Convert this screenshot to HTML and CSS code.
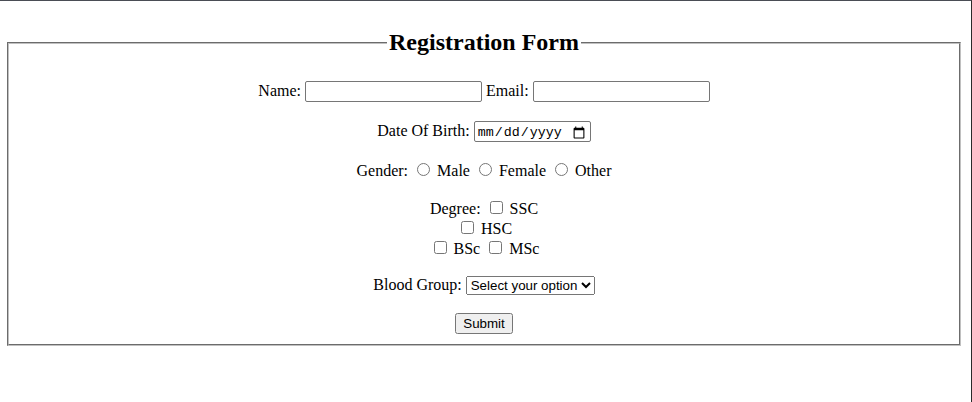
FILE: index.html
```html
<!DOCTYPE html>
<html>
<head>
<meta charset="utf-8">
<title>Registration Form</title>
<link rel="stylesheet" href="styles.css">
</head>
<body>
<form class="form">
  <fieldset class="box">
    <legend class="title">Registration Form</legend>
    <p class="row first">
      <label>Name:</label> <input type="text" class="text">
      <label>Email:</label> <input type="email" class="text">
    </p>
    <p class="row dob">
      <label>Date Of Birth:</label> <input type="date" class="date">
    </p>
    <p class="row">
      Gender:
      <input type="radio" name="g" class="choice"> Male
      <input type="radio" name="g" class="choice"> Female
      <input type="radio" name="g" class="choice"> Other
    </p>
    <p class="row degree">
      Degree: <input type="checkbox" class="choice"> SSC<br>
      <input type="checkbox" class="choice"> HSC<br>
      <input type="checkbox" class="choice"> BSc
      <input type="checkbox" class="choice"> MSc
    </p>
    <p class="row">
      Blood Group:
      <select class="select">
        <option>Select your option</option>
        <option>A+</option>
        <option>B+</option>
        <option>O+</option>
        <option>AB+</option>
      </select>
    </p>
    <p class="row last">
      <button type="submit" class="submit">Submit</button>
    </p>
  </fieldset>
</form>
</body>
</html>
```
FILE: styles.css
```css
html {
  border-top: 1px solid #4a4d55;
  border-right: 1px solid #2b2b2b;
  min-height: 100%;
  box-sizing: border-box;
}
body {
  margin: 8px 10px 8px 7px;
  font-family: "Liberation Serif", "Times New Roman", serif;
  font-size: 16px;
  color: #000;
}
.form {
  margin: 0;
  padding-top: 20px;
}
.box {
  margin: 0;
  border: 2px groove #c0c0c0;
  text-align: center;
  padding: 0 12px 0;
}
.title {
  font-size: 24px;
  font-weight: bold;
  padding: 0 2px;
}
.row {
  margin: 18px 0;
}
.row.first {
  margin-top: 25px;
}
.row.dob {
  margin-top: 19px;
}
.row.last {
  margin-top: 18px;
  margin-bottom: 10px;
}
.text {
  box-sizing: border-box;
  width: 177px;
  height: 21px;
  font-family: "Liberation Sans", Arial, sans-serif;
  font-size: 13.33px;
  border: 1px solid #767676;
  border-radius: 2px;
  padding: 1px 2px;
}
.date {
  box-sizing: border-box;
  width: 117px;
  height: 21px;
  font-family: "Liberation Mono", "DejaVu Sans Mono", monospace;
  font-size: 13.33px;
  border: 1px solid #767676;
  border-radius: 2px;
  padding: 2px 2px 0;
}
.choice {
  margin: 3px 3px 0 5px;
}
.select, .submit {
  font-family: "Liberation Sans", Arial, sans-serif;
  font-size: 13.33px;
}
```
